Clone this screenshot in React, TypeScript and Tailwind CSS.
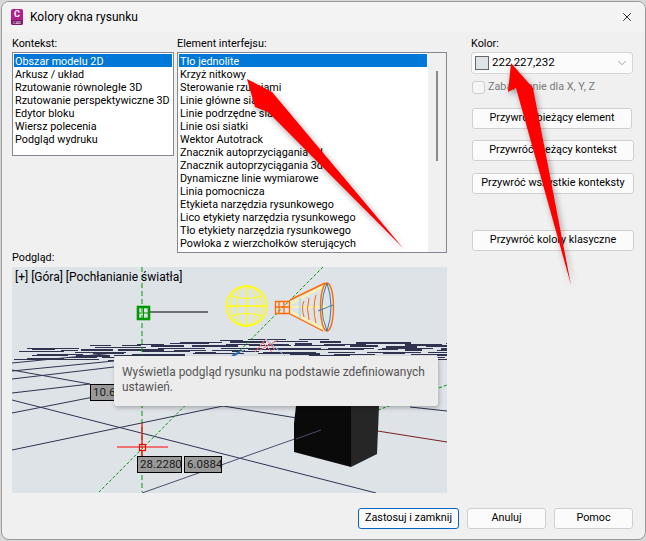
import React from "react";
import { X, ChevronDown } from "lucide-react";

const FONT = "font-['Roboto','Noto_Sans',sans-serif]";

const contexts = [
  "Obszar modelu 2D",
  "Arkusz / układ",
  "Rzutowanie równoległe 3D",
  "Rzutowanie perspektywiczne 3D",
  "Edytor bloku",
  "Wiersz polecenia",
  "Podgląd wydruku",
];

const elements = [
  "Tło jednolite",
  "Krzyż nitkowy",
  "Sterowanie rzutniami",
  "Linie główne siatki",
  "Linie podrzędne siatki",
  "Linie osi siatki",
  "Wektor Autotrack",
  "Znacznik autoprzyciągania 2d",
  "Znacznik autoprzyciągania 3d",
  "Dynamiczne linie wymiarowe",
  "Linia pomocnicza",
  "Etykieta narzędzia rysunkowego",
  "Lico etykiety narzędzia rysunkowego",
  "Tło etykiety narzędzia rysunkowego",
  "Powłoka z wierzchołków sterujących",
];

// the far grid collapses into short dashes: build them row by row with a fixed seed
const buildStripes = () => {
  const out: { x: number; y: number; w: number; h: number }[] = [];
  let seed = 7;
  const rnd = () => {
    seed = (seed * 9301 + 49297) % 233280;
    return seed / 233280;
  };
  for (let y = 337; y < 361; y += 2) {
    let x = 12 + rnd() * 30;
    while (x < 447) {
      const w = 16 + rnd() * 40;
      const top = x < 110 ? 347 - (x - 12) * 0.04 : x < 200 ? 343 - (x - 110) * 0.055 : x < 300 ? 338 : 338 + (x - 300) * 0.03;
      if (y >= top) {
        out.push({ x, y: y + Math.round(rnd()), w, h: rnd() > 0.6 ? 2 : 1 });
      }
      x += w + 2 + rnd() * 14;
    }
  }
  return out;
};
const stripes = buildStripes();

const Preview = () => (
  <div className="relative h-[226px] w-[435px] overflow-hidden bg-[#dee3e8]">
    <svg width="435" height="226" viewBox="12 267 435 226" fill="none" className="block">
      {stripes.map((s, i) => (
        <rect key={i} x={Math.round(s.x)} y={s.y} width={Math.round(s.w)} height={s.h} fill="#2f3350" />
      ))}
      <g stroke="#2f3350" strokeWidth="1">
        <path d="M12 363 114 353M12 371 114 361M12 379 114 367M12 370 90 384M12 393 90 384M12 413 114 393M12 400 376 493M12 450 223 406 297 418M410 407 447 411" />
        <path d="M142 493 320 430" stroke="#4a4d6b" />
      </g>
      <path d="M365 429 447 442" stroke="#7a2020" />
      <path d="M142 267V492" stroke="#009900" strokeDasharray="5 3" />
      <path d="M323 267 99 492M378 410 447 385" stroke="#009900" strokeDasharray="3 2" />
      <path d="M149 312H208" stroke="#000" strokeWidth="1.2" />
      <rect x="138" y="307" width="11" height="12" stroke="#009900" strokeWidth="2.6" />
      <path d="M143.5 308V318M139 313H148" stroke="#009900" />
      {/* light glyph: sphere */}
      <g stroke="#ffff00">
        <circle cx="246.5" cy="306" r="20" strokeWidth="1.6" />
        <ellipse cx="246.5" cy="306" rx="10" ry="20" />
        <ellipse cx="246.5" cy="306" rx="16" ry="20" />
        <path d="M246.5 286V326M227 306H266" strokeWidth="1.4" />
        <path d="M231 296Q246.5 301 262 296M231 316Q246.5 311 262 316" />
      </g>
      {/* light glyph: spot cone */}
      <path d="M290 304 322 287 324 329 290 311ZM290 307H330" stroke="#fff7a0" strokeWidth="1.6" />
      <g stroke="#ff6a00">
        <path d="M275.5 301.5H289.5V313.5H275.5ZM279 302V313M284 302V313M276 307H289" strokeWidth="1.3" />
        <path d="M290 300 325 283M290 314 323 331" strokeWidth="1.4" />
        <path d="M304 301Q301 307 304 317M309 298Q306 308 309 320M316 295Q312 308 316 323" />
        <ellipse cx="327" cy="307" rx="6.5" ry="24" strokeWidth="1.4" />
      </g>
      <path d="M300 298V318" stroke="#a8d8ee" strokeWidth="1.5" />
      <path d="M327 283Q317 307 327 331Q335 307 327 283M318 311 333 305" stroke="#3a78b8" />
      {/* small far glyph */}
      <path d="M255 352 266 339 275 350M262 342 272 352M260 350 278 340" stroke="#ff6f7a" />
      <path d="M266 339 285 356M232 356 244 350" stroke="#9fc4e6" />
      <path d="M232 356 240 352" stroke="#2e6fb0" strokeWidth="2" />
      {/* box */}
      <path d="M296 406H351V467L294 452V423Z" fill="#0a0a0a" />
      <path d="M351 406H379L377 454 351 467Z" fill="#262626" />
      <path d="M296 439 321 430" stroke="#4a4d6b" />
      {/* red cursor */}
      <path d="M117 447H168M142 423V444M142 451V457" stroke="#ff0000" strokeWidth="1.2" />
      <rect x="139.5" y="444.5" width="6" height="6" stroke="#ff0000" strokeWidth="1.2" />
    </svg>
    <span className="absolute left-[3px] top-[2px] whitespace-nowrap text-[12px] leading-[16px] text-black">
      [+] [Góra] [Pochłanianie światła]
    </span>
    <span className="absolute left-[78px] top-[117px] h-[17px] w-[40px] border border-black bg-[#999999] pl-[2px] text-[11.5px] leading-[15px] text-[#1a1a1a]">
      10.6
    </span>
    <span className="absolute left-[125px] top-[189px] h-[17px] w-[45px] border border-black bg-[#999999] pl-[2px] text-[11.5px] leading-[15px] text-[#1a1a1a]">
      28.2280
    </span>
    <span className="absolute left-[172px] top-[189px] h-[17px] w-[38px] border border-black bg-[#999999] pl-[2px] text-[11.5px] leading-[15px] text-[#1a1a1a]">
      6.0884
    </span>
  </div>
);

const ListBox = ({ items, width, height, scroll = false }: { items: string[]; width: string; height: string; scroll?: boolean }) => (
  <div className={`relative border border-[#828790] bg-white p-px ${width} ${height}`}>
    {scroll && (
      <div className="absolute bottom-0 right-0 top-0 w-[18px] bg-[#f0f0f0]">
        <div className="ml-[8px] mt-[18px] h-[90px] w-[2px] bg-[#8a8a8a]" />
      </div>
    )}
    {items.map((item, i) => (
      <div
        key={item}
        className={`h-[13px] whitespace-nowrap pl-px pt-[2px] text-[10.8px] leading-[12px] ${scroll ? "mr-[18px]" : ""} ${
          i === 0 ? "bg-[#0078d7] text-white" : "text-black"
        }`}
      >
        {item}
      </div>
    ))}
  </div>
);

const Button = ({ children, width = "w-[162px]", primary = false }: { children: React.ReactNode; width?: string; primary?: boolean }) => (
  <button
    className={`flex h-[21px] items-center justify-center rounded-[3px] bg-[#fbfbfb] text-[10.8px] text-black ${width} ${
      primary ? "border border-[#0067c0]" : "border border-[#d0d0d0]"
    }`}
  >
    {children}
  </button>
);

export default function App() {
  return (
    <div className={`relative h-[541px] w-[646px] overflow-hidden bg-[#d8d8d8] ${FONT}`}>
      <div className="ml-px mt-px h-[539px] w-[645px] overflow-hidden rounded-[8px] border border-[#9a9a9a] bg-[#f0f0f0]">
        <div className="flex h-[30px] items-center bg-[#f3f3f3] pl-[9px]">
          <div className="flex h-[16px] w-[12px] flex-col items-center rounded-[2px] bg-[#b0208c]">
            <span className="text-[9px] font-bold leading-[11px] text-white">C</span>
            <span className="h-[5px] w-full rounded-b-[2px] bg-[#7a1a66] text-center text-[4px] leading-[5px] text-white">CAD</span>
          </div>
          <span className="ml-[7px] text-[12px] text-black">Kolory okna rysunku</span>
          <X className="ml-auto mr-[11px] h-[14px] w-[14px] text-black" strokeWidth={1.4} />
        </div>

        <div className="flex pl-[10px] pt-[5px]">
          <div className="w-[165px]">
            <div className="mb-[1px] h-[14px] text-[10.8px] leading-[14px] text-black">Kontekst:</div>
            <ListBox items={contexts} width="w-[162px]" height="h-[104px]" />
          </div>
          <div className="w-[294px]">
            <div className="mb-[1px] h-[14px] text-[10.8px] leading-[14px] text-black">Element interfejsu:</div>
            <ListBox items={elements} width="w-[270px]" height="h-[201px]" scroll />
          </div>
          <div className="w-[165px]">
            <div className="mb-[1px] h-[14px] text-[10.8px] leading-[14px] text-black">Kolor:</div>
            <div className="flex h-[22px] w-[162px] items-center rounded-[3px] border border-[#d5d5d5] bg-[#fbfbfb] pl-[3px] pr-[3px]">
              <div className="h-[14px] w-[14px] border border-[#666] bg-[#dee3e8]" />
              <span className="ml-[3px] text-[11.5px] text-black">222,227,232</span>
              <ChevronDown className="ml-auto h-[14px] w-[14px] text-[#666]" strokeWidth={1} />
            </div>
            <div className="mt-[6px] flex h-[14px] items-center">
              <div className="ml-px h-[13px] w-[13px] rounded-[3px] border border-[#cfcfcf] bg-[#f6f6f6]" />
              <span className="ml-[3px] text-[10.8px] text-[#7a7a7a]">Zabarwienie dla X, Y, Z</span>
            </div>
            <div className="ml-px mt-[14px] flex flex-col">
              <Button width="w-[160px]">Przywróć bieżący element</Button>
              <div className="mt-[11px]"><Button>Przywróć bieżący kontekst</Button></div>
              <div className="mt-[12px]"><Button>Przywróć wszystkie konteksty</Button></div>
              <div className="mt-[36px]"><Button>Przywróć kolory klasyczne</Button></div>
            </div>
          </div>
        </div>

        <div className="pl-[10px]">
          <div className="h-[14px] text-[10.8px] leading-[10px] text-black">Podgląd:</div>
          <Preview />
        </div>

        <div className="mr-[12px] mt-[15px] flex justify-end gap-[8px]">
          <Button width="w-[101px]" primary>Zastosuj i zamknij</Button>
          <Button width="w-[79px]">Anuluj</Button>
          <Button width="w-[79px]">Pomoc</Button>
        </div>
      </div>

      <div className="absolute left-[114px] top-[356px] h-[50px] w-[324px] rounded-[3px] bg-[#ececec] py-[9px] pl-[8px] pr-[2px] text-[11.9px] leading-[15px] text-[#555555] shadow-[1px_2px_4px_rgba(0,0,0,0.25)]">
        Wyświetla podgląd rysunku na podstawie zdefiniowanych
        <br />
        ustawień.
      </div>

      <svg className="absolute left-0 top-0 drop-shadow-[2px_3px_3px_rgba(0,0,0,0.35)]" width="646" height="541" fill="#ff0000">
        <path d="M247 79 272 92 403 248 268 112 255 107Z" />
        <path d="M511 63 533 88 571 285 516 88 508 92Z" />
      </svg>
    </div>
  );
}
